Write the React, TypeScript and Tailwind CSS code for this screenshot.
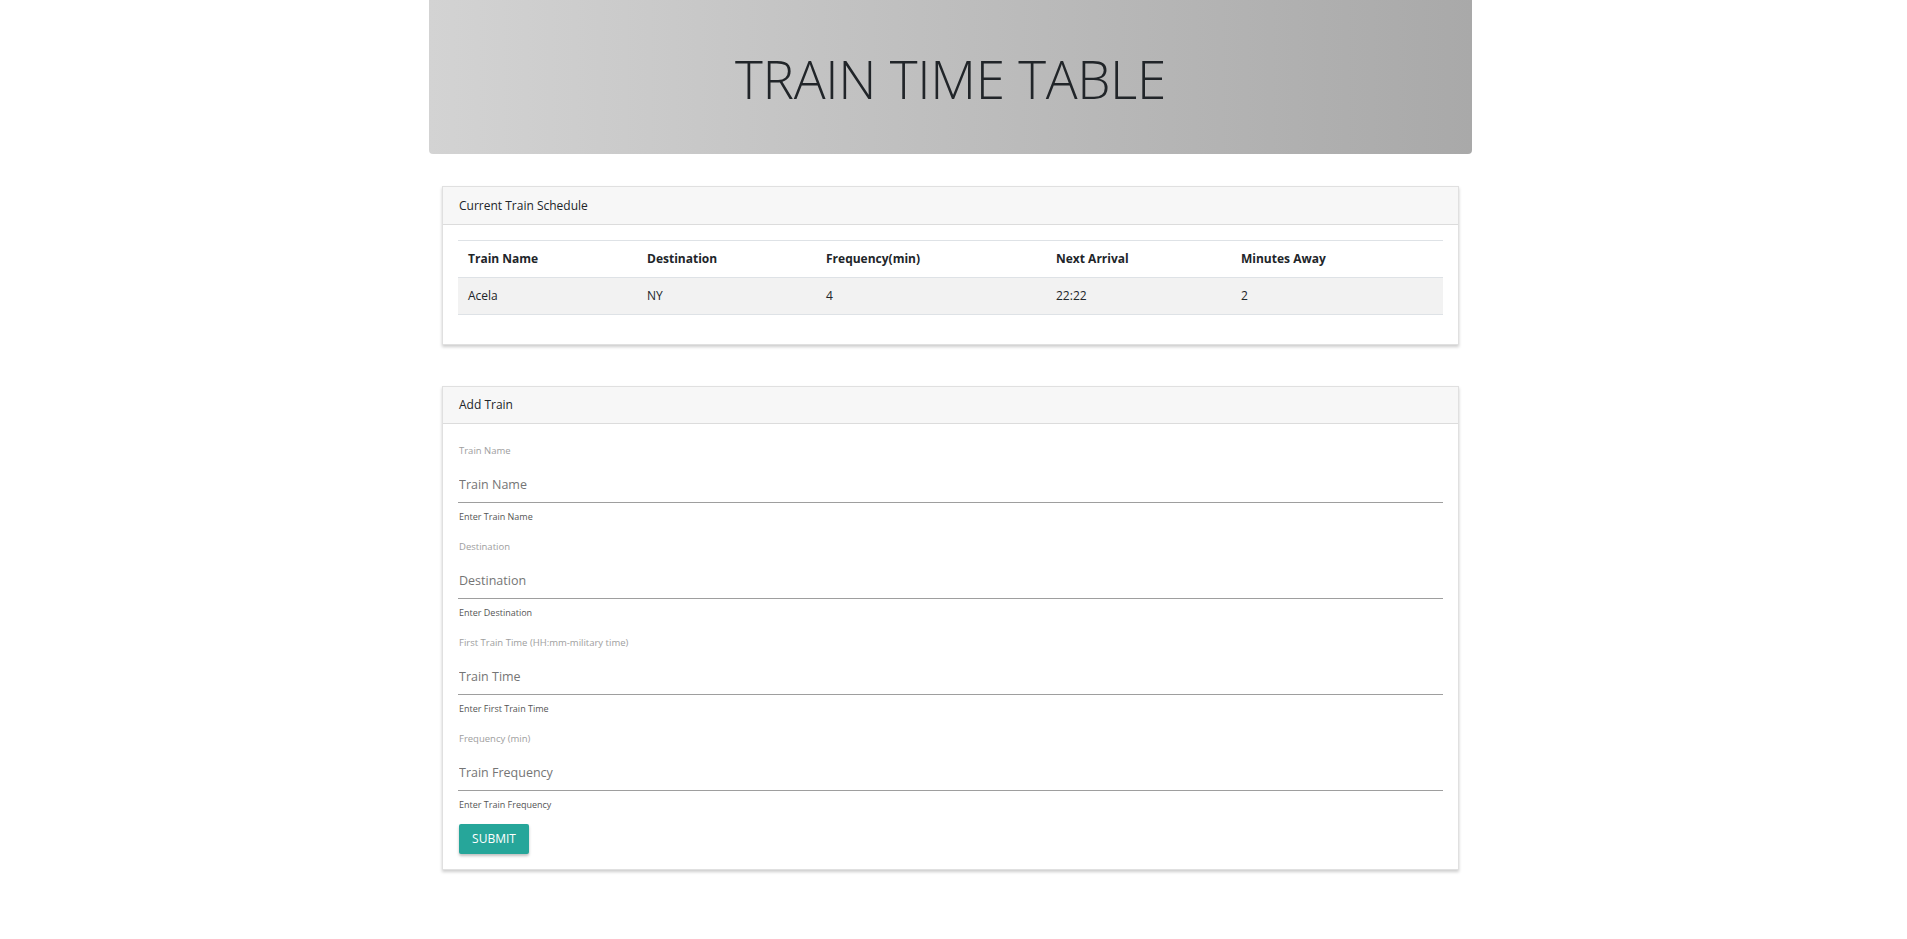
import { useState } from 'react';

const trains = [{ name: 'Acela', destination: 'NY', frequency: '4', next: '22:22', away: '2' }];

const fields = [
  { label: 'Train Name', placeholder: 'Train Name', help: 'Enter Train Name' },
  { label: 'Destination', placeholder: 'Destination', help: 'Enter Destination' },
  { label: 'First Train Time (HH:mm-military time)', placeholder: 'Train Time', help: 'Enter First Train Time' },
  { label: 'Frequency (min)', placeholder: 'Train Frequency', help: 'Enter Train Frequency' },
];

export default function App() {
  const [values, setValues] = useState<string[]>(['', '', '', '']);

  return (
    <div className="min-h-screen bg-white text-[#212529]" style={{ fontFamily: '"Open Sans", "Noto Sans", sans-serif' }}>
      <div className="ml-[429px] w-[1043px] h-[154px] rounded-b-[4px] bg-linear-to-r from-[#d3d3d3] to-[#a9a9a9] flex items-center justify-center">
        <h1 className="text-[53px] font-light tracking-[-0.3px] mt-[4px]">TRAIN TIME TABLE</h1>
      </div>

      <div className="ml-[442px] w-[1017px] mt-[32px] border border-[#e0e0e0] shadow-[0_2px_3px_rgba(0,0,0,0.2)]">
        <div className="h-[38px] bg-[#f7f7f7] border-b border-[#dcdcdc] px-[16px] flex items-center text-[12px]">
          Current Train Schedule
        </div>
        <div className="px-[15px] pt-[15px] pb-[29px]">
          <table className="w-full table-fixed text-[12px] border-collapse">
            <thead>
              <tr className="border-t border-[#dee2e6] h-[37px] text-left">
                <th className="w-[179px] px-[10px] font-bold">Train Name</th>
                <th className="w-[179px] px-[10px] font-bold">Destination</th>
                <th className="w-[230px] px-[10px] font-bold">Frequency(min)</th>
                <th className="w-[185px] px-[10px] font-bold">Next Arrival</th>
                <th className="px-[10px] font-bold">Minutes Away</th>
              </tr>
            </thead>
            <tbody>
              {trains.map((t, i) => (
                <tr key={i} className="h-[37px] bg-[#f2f2f2] border-t border-b border-[#dee2e6]">
                  <td className="px-[10px]">{t.name}</td>
                  <td className="px-[10px]">{t.destination}</td>
                  <td className="px-[10px]">{t.frequency}</td>
                  <td className="px-[10px]">{t.next}</td>
                  <td className="px-[10px]">{t.away}</td>
                </tr>
              ))}
            </tbody>
          </table>
        </div>
      </div>

      <div className="ml-[442px] w-[1017px] mt-[41px] border border-[#e0e0e0] shadow-[0_2px_3px_rgba(0,0,0,0.2)]">
        <div className="h-[37px] bg-[#f7f7f7] border-b border-[#dcdcdc] px-[16px] flex items-center text-[12px]">
          Add Train
        </div>
        <form className="px-[15px] pt-[17px] pb-[15px]" onSubmit={e => e.preventDefault()}>
          {fields.map((f, i) => (
            <div key={i} className={i === fields.length - 1 ? 'mb-[9px]' : 'mb-[10px]'}>
              <div className="h-[20px] pl-[1px] flex items-center text-[9.5px] text-[#9e9e9e]">{f.label}</div>
              <input
                className="w-full h-[42px] pt-[5px] pl-[1px] border-b border-[#9e9e9e] outline-none text-[12.5px] placeholder:text-[#757575]"
                placeholder={f.placeholder}
                value={values[i]}
                onChange={e => setValues(v => v.map((x, j) => (j === i ? e.target.value : x)))}
              />
              <div className="h-[20px] mt-[4px] pl-[1px] flex items-center text-[9px] text-[#555]">{f.help}</div>
            </div>
          ))}
          <button className="h-[30px] w-[70px] ml-[1px] rounded-[2px] bg-[#26a69a] text-white text-[12px] shadow-[0_2px_3px_rgba(0,0,0,0.25)]">
            SUBMIT
          </button>
        </form>
      </div>
    </div>
  );
}
